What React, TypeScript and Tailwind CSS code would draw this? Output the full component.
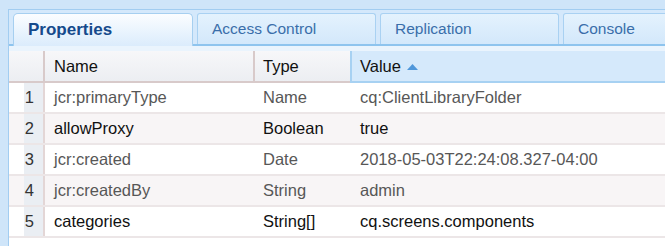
import React from "react";

type Row = {
    name: string;
    type: string;
    value: string;
    muted: boolean;
};

const rows: Row[] = [
    { name: "jcr:primaryType", type: "Name", value: "cq:ClientLibraryFolder", muted: true },
    { name: "allowProxy", type: "Boolean", value: "true", muted: false },
    { name: "jcr:created", type: "Date", value: "2018-05-03T22:24:08.327-04:00", muted: true },
    { name: "jcr:createdBy", type: "String", value: "admin", muted: true },
    { name: "categories", type: "String[]", value: "cq.screens.components", muted: false },
];

const tabs = [
    { id: "properties", label: "Properties" },
    { id: "access", label: "Access Control" },
    { id: "replication", label: "Replication" },
    { id: "console", label: "Console" },
];

export default function App() {
    const activeTab = "properties";

    return (
        <div
            className="w-[665px] h-[246px] overflow-hidden bg-[#cfe5f9] pt-[9px] pl-[8px]"
            style={{ fontFamily: '"Liberation Sans", Arial, sans-serif' }}
        >
            <div className="h-full flex flex-col bg-white border-l border-t border-[#a2cdf1]">
                {/* Tab strip */}
                <div className="h-[36px] shrink-0 flex items-end gap-[4px] pl-[4px] bg-[#d4e8fb] border-b-2 border-[#8ec4ee]">
                    {tabs.map((tab) =>
                        tab.id === activeTab ? (
                            <div
                                key={tab.id}
                                className="w-[180px] h-[33px] -mb-[2px] shrink-0 flex items-center pl-[14px] rounded-t-[5px] border border-b-0 border-[#a6cff0] bg-gradient-to-b from-[#fbfdff] to-[#dbecfc] text-[17px] font-bold text-[#154a8c]"
                            >
                                {tab.label}
                            </div>
                        ) : (
                            <div
                                key={tab.id}
                                className="w-[179px] h-[31px] shrink-0 flex items-center pl-[14px] rounded-t-[3px] border border-b-0 border-[#a9d1f2] bg-gradient-to-b from-[#e4f2fd] to-[#d3e8fb] text-[15.5px] text-[#3a6eaa]"
                            >
                                {tab.label}
                            </div>
                        )
                    )}
                </div>

                {/* Spacer band */}
                <div className="h-[5px] shrink-0 bg-[#eaf4fd]" />

                {/* Header */}
                <div className="h-[32px] shrink-0 flex text-[16.5px] text-[#111]">
                    <div className="w-[36px] shrink-0 bg-gradient-to-b from-[#f7f7f9] to-[#eceef2] border-b-2 border-r-2 border-[#d8caca]" />
                    <div className="w-[210px] shrink-0 flex items-center pl-[9px] bg-gradient-to-b from-[#f7f7f9] to-[#eceef2] border-b-2 border-r-2 border-[#d8caca]">
                        Name
                    </div>
                    <div className="w-[95px] shrink-0 flex items-center pl-[8px] bg-gradient-to-b from-[#f7f7f9] to-[#eceef2] border-b-2 border-[#d8caca]">
                        Type
                    </div>
                    <div className="flex-1 flex items-center gap-[6px] pl-[8px] bg-[#d5e9fb] border-l-2 border-b-2 border-[#a7d1f2]">
                        <span>Value</span>
                        <svg width="11" height="6" viewBox="0 0 11 6" className="mt-[1px]">
                            <path d="M5.5 0 L11 6 L0 6 Z" fill="#4f97da" />
                        </svg>
                    </div>
                </div>

                {/* Rows */}
                {rows.map((row, i) => (
                    <div
                        key={row.name}
                        className={`h-[31px] shrink-0 flex border-b-2 border-[#ece6e7] text-[16.5px] ${
                            i % 2 === 1 ? "bg-[#f8f5f6]" : "bg-white"
                        } ${row.muted ? "text-[#575757]" : "text-[#111]"}`}
                    >
                        <div className="w-[36px] shrink-0 flex items-center justify-end pr-[9px] border-r-2 border-[#e3d6d6] bg-[linear-gradient(to_right,transparent_15px,#eaeef3_15px)] text-[#333]">
                            {i + 1}
                        </div>
                        <div className="w-[210px] shrink-0 flex items-center pl-[9px]">
                            {row.name}
                        </div>
                        <div className="w-[97px] shrink-0 flex items-center pl-[8px]">
                            {row.type}
                        </div>
                        <div className="flex-1 flex items-center pl-[8px]">
                            {row.value}
                        </div>
                    </div>
                ))}
            </div>
        </div>
    );
}
